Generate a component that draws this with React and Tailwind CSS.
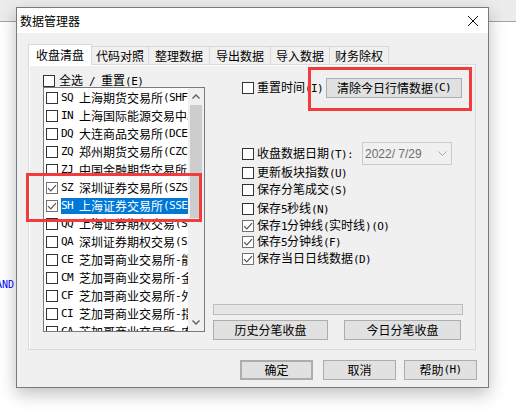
import React from 'react';

const latinRun = /^[\x00-\xff]+$/;

// SimSun-like look: CJK at 12px, latin runs half width
function Mixed({ text }) {
  return text
    .split(/([\x00-\xff]+)/)
    .filter(Boolean)
    .map((part, i) =>
      latinRun.test(part) ? (
        <span key={i} className="whitespace-pre font-['DejaVu_Sans_Mono',monospace] text-[11px] tracking-[-0.6px]">
          {part}
        </span>
      ) : (
        <span key={i}>{part}</span>
      )
    );
}

function Box({ checked }) {
  return (
    <span
      className={`flex h-[12px] w-[12px] shrink-0 items-center justify-center border bg-white ${
        checked ? 'border-[#727272]' : 'border-[#333333]'
      }`}
    >
      {checked && (
        <svg width="10" height="8" viewBox="0 0 10 8">
          <path d="M1 4.2 L3.8 7 L9 1.2" fill="none" stroke="#555555" strokeWidth="1.2" />
        </svg>
      )}
    </span>
  );
}

function CheckRow({ label, checked, className = '' }) {
  return (
    <div className={`flex h-[16px] items-center gap-[3px] text-[12px] leading-[16px] text-black ${className}`}>
      <Box checked={checked} />
      <span className="whitespace-nowrap">
        <Mixed text={label} />
      </span>
    </div>
  );
}

function Btn({ children, className = '' }) {
  return (
    <div
      className={`flex h-[20px] items-center justify-center border border-[#adadad] bg-[#e1e1e1] text-[12px] leading-[16px] text-black ${className}`}
    >
      {children}
    </div>
  );
}

const markets = [
  ['SQ', '上海期货交易所(SHFE)'],
  ['IN', '上海国际能源交易中心(INE)'],
  ['DQ', '大连商品交易所(DCE)'],
  ['ZQ', '郑州期货交易所(CZCE)'],
  ['ZJ', '中国金融期货交易所(CFFEX)'],
  ['SZ', '深圳证券交易所(SZSE)', true],
  ['SH', '上海证券交易所(SSE)', true, true],
  ['QQ', '上海证券期权交易(SHOP)'],
  ['QA', '深圳证券期权交易(SZOP)'],
  ['CE', '芝加哥商业交易所-能源'],
  ['CM', '芝加哥商业交易所-金属'],
  ['CF', '芝加哥商业交易所-外汇'],
  ['CI', '芝加哥商业交易所-指数'],
  ['CA', '芝加哥商业交易所-农产品'],
];

const tabs = [
  ['代码对照', 'w-[57px]'],
  ['整理数据', 'w-[61px]'],
  ['导出数据', 'w-[61px]'],
  ['导入数据', 'w-[59px]'],
  ['财务除权', 'w-[59px]'],
];

function Chevron({ up }) {
  return (
    <svg width="8" height="5" viewBox="0 0 8 5">
      <path d={up ? 'M0.5 4.5 L4 1 L7.5 4.5' : 'M0.5 0.5 L4 4 L7.5 0.5'} fill="none" stroke="#606060" strokeWidth="1.4" />
    </svg>
  );
}

export default function App() {
  return (
    <div className="relative h-[413px] w-[516px] overflow-hidden bg-white font-['Noto_Sans_CJK_SC',sans-serif]">
      <div className="h-[22px] border-b border-[#a3a3a3] bg-[#ececec]" />
      <div className="absolute left-[-4px] top-[280px] font-['DejaVu_Sans_Mono',monospace] text-[10px] leading-[10px] text-[#0000ff]">
        AND
      </div>

      <div className="absolute left-[16px] top-[7px] flex h-[381px] w-[473px] flex-col border border-[#7a7a7a] bg-[#f0f0f0] shadow-[0_6px_16px_rgba(0,0,0,0.25)]">
        <div className="flex h-[25px] shrink-0 items-center justify-between bg-white pl-[3px] pr-[10px]">
          <span className="text-[12px] leading-[16px] text-black">数据管理器</span>
          <svg width="10" height="10" viewBox="0 0 10 10">
            <path d="M0 0 L10 10 M10 0 L0 10" stroke="#111111" strokeWidth="1" />
          </svg>
        </div>

        <div className="flex flex-1 flex-col px-[11px] pt-[11px]">
          <div className="flex h-[20px] items-end">
            <div className="relative z-10 -mb-[1px] flex h-[21px] w-[64px] items-center justify-center border border-b-0 border-[#d9d9d9] bg-white text-[12px] leading-[16px] text-black">
              收盘清盘
            </div>
            {tabs.map(([t, w]) => (
              <div
                key={t}
                className={`flex h-[18px] items-center justify-center border-t border-r border-[#d9d9d9] bg-[#f0f0f0] text-[12px] leading-[16px] text-black ${w}`}
              >
                {t}
              </div>
            ))}
          </div>

          <div className="flex h-[286px] w-[448px] border border-[#d9d9d9] shadow-[inset_1px_1px_0_#ffffff]">
            <div className="flex flex-col pl-[14px] pt-[9px]">
              <div className="flex h-[13px] items-center gap-[4px] text-[12px] leading-[16px] text-black">
                <Box />
                <span className="whitespace-nowrap">
                  <Mixed text="全选 / 重置(E)" />
                </span>
              </div>
              <div className="flex h-[245px] w-[162px] border border-[#7a7a7a] bg-white">
                <div className="min-w-0 flex-1 overflow-hidden pt-[1px]">
                  {markets.map(([code, name, checked, sel]) => (
                    <div key={code} className="flex h-[18px] items-center pl-[2px]">
                      <Box checked={checked} />
                      <span
                        className={`ml-[3px] flex h-[16px] flex-1 items-center whitespace-nowrap text-[12px] leading-[16px] ${
                          sel ? 'bg-[#0078d7] text-white' : 'text-black'
                        }`}
                      >
                        <Mixed text={`${code} ${name}`} />
                      </span>
                    </div>
                  ))}
                </div>
                <div className="flex w-[16px] shrink-0 flex-col bg-[#f0f0f0]">
                  <div className="flex h-[17px] items-center justify-center">
                    <Chevron up />
                  </div>
                  <div className="mx-[2px] h-[113px] bg-[#cdcdcd]" />
                  <div className="flex-1" />
                  <div className="flex h-[17px] items-center justify-center">
                    <Chevron />
                  </div>
                </div>
              </div>
            </div>

            <div className="ml-[8px] flex w-[250px] flex-col pb-[9px] pt-[13px]">
              <div className="flex h-[20px] items-center pl-[29px]">
                <CheckRow label="重置时间(I)" />
                <Btn className="ml-auto mr-[1px] w-[136px]">
                  <Mixed text="清除今日行情数据(C)" />
                </Btn>
              </div>

              <div className="mt-[44px] flex h-[23px] items-center pl-[29px]">
                <CheckRow label="收盘数据日期(T):" />
                <div className="ml-auto mr-[11px] flex h-[23px] w-[90px] items-center justify-between border border-[#cccccc] bg-[#f0f0f0] pl-[2px] pr-[4px]">
                  <span className="whitespace-pre font-['Liberation_Sans',sans-serif] text-[12px] leading-[14px] text-[#6d6d6d]">
                    2022/ 7/29
                  </span>
                  <svg width="9" height="5" viewBox="0 0 9 5">
                    <path d="M0.5 0.5 L4.5 4.5 L8.5 0.5" fill="none" stroke="#a6a6a6" strokeWidth="1" />
                  </svg>
                </div>
              </div>

              <div className="flex flex-col pl-[29px]">
                <CheckRow label="更新板块指数(U)" />
                <CheckRow label="保存分笔成交(S)" className="mt-[1px]" />
                <CheckRow label="保存5秒线(N)" className="mt-[3px]" />
                <CheckRow label="保存1分钟线(实时线)(O)" checked className="mt-[1px]" />
                <CheckRow label="保存5分钟线(F)" checked />
                <CheckRow label="保存当日日线数据(D)" checked className="mt-[1px]" />
              </div>

              <div className="mt-auto flex flex-col">
                <div className="h-[11px] w-[250px] border border-[#bcbcbc] bg-[#e6e6e6]" />
                <div className="mt-[5px] flex">
                  <Btn className="w-[115px]">历史分笔收盘</Btn>
                  <Btn className="ml-[16px] w-[117px]">今日分笔收盘</Btn>
                </div>
              </div>
            </div>
          </div>

          <div className="mt-[10px] flex justify-end">
            <Btn className="w-[73px] border-2 border-[#0078d7]">确定</Btn>
            <Btn className="ml-[10px] w-[73px]">取消</Btn>
            <Btn className="ml-[8px] w-[73px]">
              <Mixed text="帮助(H)" />
            </Btn>
          </div>
        </div>
      </div>

      <div className="pointer-events-none absolute left-[26px] top-[173px] h-[49px] w-[176px] border-[3px] border-[#f23c3c]" />
      <div className="pointer-events-none absolute left-[308px] top-[67px] h-[44px] w-[164px] border-[3px] border-[#f23c3c]" />
    </div>
  );
}
